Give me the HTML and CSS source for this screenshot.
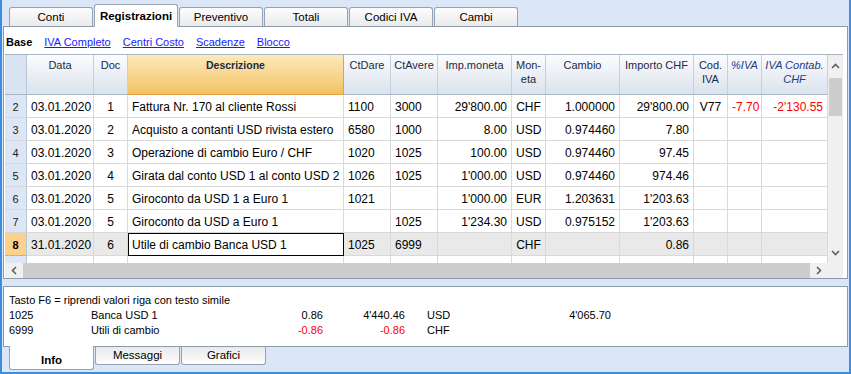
FILE: index.html
```html
<html>

<head>
    <meta charset="UTF-8">
    <meta name="viewport" content="width=device-width, initial-scale=1.0">
    <title>Registrazioni</title>
    <link rel="stylesheet" href="styles.css">
</head>

<body>
    <div class="window">
        <div class="tabs">
            <div class="tab">Conti</div>
            <div class="tab active">Registrazioni</div>
            <div class="tab">Preventivo</div>
            <div class="tab">Totali</div>
            <div class="tab">Codici IVA</div>
            <div class="tab">Cambi</div>
        </div>

        <div class="panel">
            <div class="views">
                <span class="view current">Base</span>
                <a class="view" href="#">IVA Completo</a>
                <a class="view" href="#">Centri Costo</a>
                <a class="view" href="#">Scadenze</a>
                <a class="view" href="#">Blocco</a>
            </div>

            <div class="grid">
                <div class="grid-main">
                    <div class="grid-body">
                        <table>
                            <colgroup>
                                <col style="width: 22px">
                                <col style="width: 67px">
                                <col style="width: 34px">
                                <col style="width: 216px">
                                <col style="width: 47px">
                                <col style="width: 47px">
                                <col style="width: 74px">
                                <col style="width: 34px">
                                <col style="width: 74px">
                                <col style="width: 74px">
                                <col style="width: 34px">
                                <col style="width: 34px">
                                <col style="width: 66px">
                            </colgroup>
                            <tr class="head">
                                <th class="num"></th>
                                <th>Data</th>
                                <th>Doc</th>
                                <th class="sorted">Descrizione</th>
                                <th>CtDare</th>
                                <th>CtAvere</th>
                                <th>Imp.moneta</th>
                                <th>Mon-<br>eta</th>
                                <th>Cambio</th>
                                <th>Importo CHF</th>
                                <th>Cod.<br>IVA</th>
                                <th class="vat">%IVA</th>
                                <th class="vat">IVA Contab.<br>CHF</th>
                            </tr>
                            <tr>
                                <td class="num">2</td>
                                <td>03.01.2020</td>
                                <td class="c">1</td>
                                <td>Fattura Nr. 170 al cliente Rossi</td>
                                <td>1100</td>
                                <td>3000</td>
                                <td class="r">29'800.00</td>
                                <td class="c">CHF</td>
                                <td class="r">1.000000</td>
                                <td class="r">29'800.00</td>
                                <td class="c">V77</td>
                                <td class="r neg">-7.70</td>
                                <td class="r neg">-2'130.55</td>
                            </tr>
                            <tr>
                                <td class="num">3</td>
                                <td>03.01.2020</td>
                                <td class="c">2</td>
                                <td>Acquisto a contanti USD rivista estero</td>
                                <td>6580</td>
                                <td>1000</td>
                                <td class="r">8.00</td>
                                <td class="c">USD</td>
                                <td class="r">0.974460</td>
                                <td class="r">7.80</td>
                                <td></td>
                                <td></td>
                                <td></td>
                            </tr>
                            <tr>
                                <td class="num">4</td>
                                <td>03.01.2020</td>
                                <td class="c">3</td>
                                <td>Operazione di cambio Euro / CHF</td>
                                <td>1020</td>
                                <td>1025</td>
                                <td class="r">100.00</td>
                                <td class="c">USD</td>
                                <td class="r">0.974460</td>
                                <td class="r">97.45</td>
                                <td></td>
                                <td></td>
                                <td></td>
                            </tr>
                            <tr>
                                <td class="num">5</td>
                                <td>03.01.2020</td>
                                <td class="c">4</td>
                                <td>Girata dal conto USD 1 al conto USD 2</td>
                                <td>1026</td>
                                <td>1025</td>
                                <td class="r">1'000.00</td>
                                <td class="c">USD</td>
                                <td class="r">0.974460</td>
                                <td class="r">974.46</td>
                                <td></td>
                                <td></td>
                                <td></td>
                            </tr>
                            <tr>
                                <td class="num">6</td>
                                <td>03.01.2020</td>
                                <td class="c">5</td>
                                <td>Giroconto da USD 1 a Euro 1</td>
                                <td>1021</td>
                                <td></td>
                                <td class="r">1'000.00</td>
                                <td class="c">EUR</td>
                                <td class="r">1.203631</td>
                                <td class="r">1'203.63</td>
                                <td></td>
                                <td></td>
                                <td></td>
                            </tr>
                            <tr>
                                <td class="num">7</td>
                                <td>03.01.2020</td>
                                <td class="c">5</td>
                                <td>Giroconto da USD a Euro 1</td>
                                <td></td>
                                <td>1025</td>
                                <td class="r">1'234.30</td>
                                <td class="c">USD</td>
                                <td class="r">0.975152</td>
                                <td class="r">1'203.63</td>
                                <td></td>
                                <td></td>
                                <td></td>
                            </tr>
                            <tr class="selected">
                                <td class="num">8</td>
                                <td>31.01.2020</td>
                                <td class="c">6</td>
                                <td class="cursor">Utile di cambio Banca USD 1</td>
                                <td>1025</td>
                                <td>6999</td>
                                <td class="r"></td>
                                <td class="c">CHF</td>
                                <td class="r"></td>
                                <td class="r">0.86</td>
                                <td></td>
                                <td></td>
                                <td></td>
                            </tr>
                            <tr>
                                <td class="num"></td>
                                <td></td>
                                <td></td>
                                <td></td>
                                <td></td>
                                <td></td>
                                <td></td>
                                <td></td>
                                <td></td>
                                <td></td>
                                <td></td>
                                <td></td>
                                <td></td>
                            </tr>
                        </table>
                    </div>
                    <div class="vscroll">
                        <div class="arrow">
                            <svg width="9" height="6" viewBox="0 0 9 6"><path d="M1 5 L4.5 1.5 L8 5" fill="none" stroke="#606060" stroke-width="1.6"/></svg>
                        </div>
                        <div class="vthumb"></div>
                        <div class="fill"></div>
                        <div class="arrow">
                            <svg width="9" height="6" viewBox="0 0 9 6"><path d="M1 1 L4.5 4.5 L8 1" fill="none" stroke="#606060" stroke-width="1.6"/></svg>
                        </div>
                    </div>
                </div>
                <div class="hscroll">
                    <div class="harrow">
                        <svg width="6" height="9" viewBox="0 0 6 9"><path d="M5 1 L1.5 4.5 L5 8" fill="none" stroke="#606060" stroke-width="1.6"/></svg>
                    </div>
                    <div class="hthumb"></div>
                    <div class="harrow">
                        <svg width="6" height="9" viewBox="0 0 6 9"><path d="M1 1 L4.5 4.5 L1 8" fill="none" stroke="#606060" stroke-width="1.6"/></svg>
                    </div>
                    <div class="corner"></div>
                </div>
            </div>
        </div>

        <div class="info">
            <div class="hint">Tasto F6 = riprendi valori riga con testo simile</div>
            <div class="balances">
                <span>1025</span>
                <span>Banca USD 1</span>
                <span class="r">0.86</span>
                <span class="r">4'440.46</span>
                <span>USD</span>
                <span class="r">4'065.70</span>

                <span>6999</span>
                <span>Utili di cambio</span>
                <span class="r neg">-0.86</span>
                <span class="r neg">-0.86</span>
                <span>CHF</span>
                <span></span>
            </div>
        </div>

        <div class="bottom-tabs">
            <div class="btab active">Info</div>
            <div class="btab">Messaggi</div>
            <div class="btab">Grafici</div>
        </div>
    </div>
</body>

</html>
```

FILE: styles.css
```css
body {
    margin: 0;
    font-family: "Liberation Sans", Arial, sans-serif;
    color: #000;
}

.window {
    width: 851px;
    height: 374px;
    box-sizing: border-box;
    background: #dbe6f7;
    border: 2px solid #3b8de2;
    border-top: 0;
    padding: 4px 1px 0;
}

/* top tabs */
.tabs {
    display: flex;
    align-items: flex-end;
    height: 22px;
    padding-left: 6px;
}

.tab {
    width: 84px;
    height: 19px;
    margin-right: 1px;
    box-sizing: border-box;
    border: 1px solid #95a2b3;
    border-bottom: 0;
    border-radius: 3px 3px 0 0;
    background: linear-gradient(#fdfdfd, #eaeaea);
    font-size: 11.5px;
    line-height: 18px;
    text-align: center;
}

.tab.active {
    position: relative;
    height: 23px;
    margin-bottom: -1px;
    padding-top: 2px;
    background: #fff;
    font-weight: bold;
    z-index: 1;
}

/* main panel */
.panel {
    width: 845px;
    height: 253px;
    box-sizing: border-box;
    border: 1px solid #8e9bab;
    background: #fff;
    padding: 0 1px;
}

.views {
    display: flex;
    gap: 12px;
    height: 27px;
    box-sizing: border-box;
    padding: 8px 0 0 1px;
    font-size: 11px;
    line-height: 15px;
}

.view {
    color: #1a1aff;
    text-decoration: underline;
}

.view.current {
    color: #000;
    font-weight: bold;
    text-decoration: none;
}

.grid {
    width: 838px;
}

.grid-main {
    display: flex;
    height: 208px;
    border-top: 1px solid #a7b4c4;
}

.grid-body {
    width: 823px;
    overflow: hidden;
}

table {
    width: 823px;
    table-layout: fixed;
    border-collapse: separate;
    border-spacing: 0;
    font-size: 12px;
}

tr {
    height: 23px;
}

td {
    padding: 1px 4px 0;
    border-right: 1px solid #d9d9d9;
    border-bottom: 1px solid #d9d9d9;
    white-space: nowrap;
    overflow: hidden;
}

td.r {
    text-align: right;
}

td.c {
    text-align: center;
}

.neg {
    color: #ff0000;
}

tr.head {
    height: 40px;
}

th {
    padding: 3px 2px 0;
    vertical-align: top;
    font-size: 11px;
    font-weight: normal;
    line-height: 14px;
    color: #1b2b44;
    background: linear-gradient(#fbfcfe, #dbe3ed);
    border-right: 1px solid #c5d0dc;
    border-bottom: 1px solid #a9b6c6;
    white-space: nowrap;
    overflow: hidden;
}

th.sorted {
    font-weight: bold;
    font-size: 10.5px;
    background: linear-gradient(#fde9bb, #f2c264);
    border-right-color: #e8a23c;
    border-bottom-color: #e8a23c;
}

th.vat {
    font-style: italic;
    color: #223b84;
}

.num,
th.num {
    padding: 1px 0 0;
    text-align: center;
    font-size: 11px;
    color: #222;
    background: #dce6f4;
    border-right-color: #b9c6d6;
}

th.num {
    background: #d8e3f1;
}

tr.selected td {
    background: #e9e9e9;
}

tr.selected td.num {
    background: #fdd08c;
    border-bottom-color: #f0a848;
    font-weight: bold;
    color: #000;
}

tr.selected td.cursor {
    background: #fff;
    outline: 1px solid #000;
    outline-offset: -1px;
}

/* scrollbars */
.vscroll {
    display: flex;
    flex-direction: column;
    width: 15px;
    background: #f0f0f0;
}

.arrow {
    display: flex;
    align-items: center;
    justify-content: center;
    height: 21px;
}

.vthumb {
    height: 38px;
    margin: 2px 1px 0;
    background: #cdcdcd;
}

.fill {
    flex: 1;
}

.hscroll {
    display: flex;
    height: 15px;
    background: #f0f0f0;
}

.harrow {
    display: flex;
    align-items: center;
    justify-content: center;
    width: 18px;
}

.hthumb {
    width: 787px;
    background: #cdcdcd;
}

.corner {
    width: 15px;
}

/* info panel */
.info {
    height: 61px;
    margin-top: 7px;
    box-sizing: border-box;
    border: 1px solid #8e9bab;
    background: #fff;
    padding: 6px 5px 0;
    font-size: 11px;
    line-height: 15px;
}

.balances {
    display: grid;
    grid-template-columns: 82px 152px 80px 82px 124px 82px;
}

.balances .r {
    text-align: right;
}

.balances span:nth-child(6n+5) {
    padding-left: 22px;
}

/* bottom tabs */
.bottom-tabs {
    display: flex;
    align-items: flex-start;
    padding-left: 6px;
}

.btab {
    width: 85px;
    height: 18px;
    margin-right: 1px;
    box-sizing: border-box;
    border: 1px solid #95a2b3;
    border-top: 0;
    border-radius: 0 0 3px 3px;
    background: linear-gradient(#eaeaea, #fdfdfd);
    font-size: 11.5px;
    line-height: 17px;
    text-align: center;
}

.btab.active {
    position: relative;
    width: 85px;
    height: 24px;
    margin-top: -1px;
    padding-top: 6px;
    background: #fff;
    font-weight: bold;
    z-index: 1;
}
```
